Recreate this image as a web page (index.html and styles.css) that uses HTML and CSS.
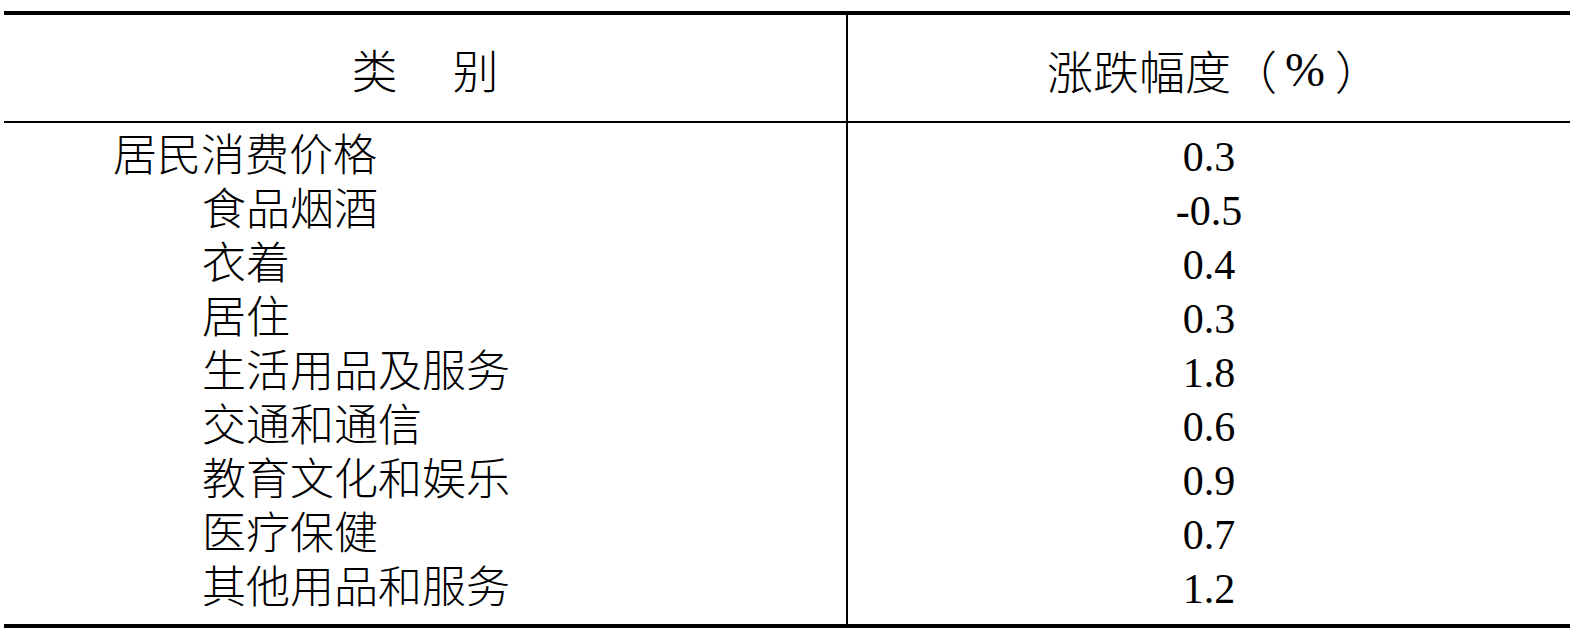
FILE: index.html
```html
<!DOCTYPE html>
<html lang="zh-CN">
<head>
<meta charset="utf-8">
<title>居民消费价格涨跌幅度</title>
<link rel="stylesheet" href="styles.css">
</head>
<body>
<div class="table">
  <div class="head">
    <div class="hcell hcat">类<span class="gap"></span>别</div>
    <div class="hcell hval">涨跌幅度（<span class="pct">%</span>）</div>
  </div>
  <div class="body">
    <div class="col cats">
      <div class="row">居民消费价格</div>
      <div class="row sub">食品烟酒</div>
      <div class="row sub">衣着</div>
      <div class="row sub">居住</div>
      <div class="row sub">生活用品及服务</div>
      <div class="row sub">交通和通信</div>
      <div class="row sub">教育文化和娱乐</div>
      <div class="row sub">医疗保健</div>
      <div class="row sub">其他用品和服务</div>
    </div>
    <div class="col vals">
      <div class="row num">0.3</div>
      <div class="row num">-0.5</div>
      <div class="row num">0.4</div>
      <div class="row num">0.3</div>
      <div class="row num">1.8</div>
      <div class="row num">0.6</div>
      <div class="row num">0.9</div>
      <div class="row num">0.7</div>
      <div class="row num">1.2</div>
    </div>
  </div>
</div>
</body>
</html>
```

FILE: styles.css
```css
html, body {
  margin: 0;
  padding: 0;
  background: #ffffff;
  overflow: hidden;
}

body {
  padding: 11px 0 0 4px;
  font-family: "Liberation Serif", "Noto Sans CJK SC", serif;
  color: #000000;
}

.table {
  width: 1566px;
  border-top: 4px solid #000000;
  border-bottom: 4px solid #000000;
}

.head {
  display: grid;
  grid-template-columns: 844px 1fr;
  height: 106px;
  border-bottom: 2px solid #000000;
}

.hcell {
  display: flex;
  align-items: center;
  justify-content: center;
  font-size: 46px;
  font-weight: 300;
}

.hcat {
  border-right: 2px solid #000000;
}

.hval {
  padding-top: 2px;
  padding-left: 10px;
}

.pct {
  margin: 0 10px 0 8px;
  font-family: "Liberation Serif", serif;
  font-size: 48px;
  font-weight: 400;
}

.gap {
  display: inline-block;
  width: 55px;
}

.body {
  display: grid;
  grid-template-columns: 844px 1fr;
}

.col {
  padding: 7px 0 8px;
}

.cats {
  border-right: 2px solid #000000;
  padding-left: 109px;
}

.row {
  height: 54px;
  line-height: 54px;
  font-size: 44px;
  font-weight: 300;
  white-space: nowrap;
}

.sub {
  padding-left: 89px;
}

.vals {
  text-align: center;
}

.num {
  font-size: 42px;
  font-weight: 400;
}
```
